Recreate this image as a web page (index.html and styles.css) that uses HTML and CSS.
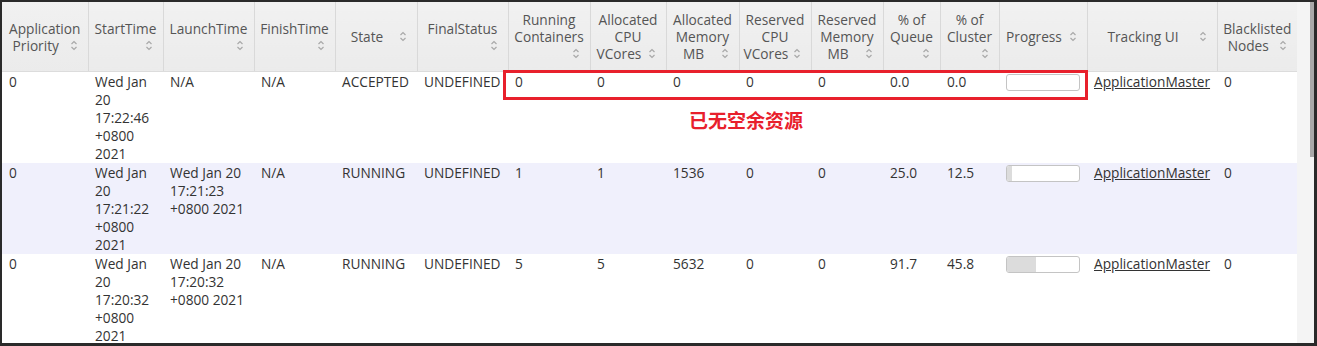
FILE: index.html
```html
<!DOCTYPE html>
<html lang="en">
<head>
<meta charset="utf-8">
<title>Applications</title>
<link rel="stylesheet" href="styles.css">
</head>
<body>
<div class="frame">
  <div class="viewport">
    <table class="apps">
      <colgroup>
        <col style="width:86px"><col style="width:75px"><col style="width:91px"><col style="width:81px">
        <col style="width:82px"><col style="width:91px"><col style="width:82px"><col style="width:76px">
        <col style="width:73px"><col style="width:72px"><col style="width:72px"><col style="width:57px">
        <col style="width:59px"><col style="width:88px"><col style="width:130px"><col style="width:80px">
      </colgroup>
      <thead>
        <tr>
          <th>Application Priority<span class="si"></span></th>
          <th>StartTime<span class="si"></span></th>
          <th>LaunchTime<span class="si"></span></th>
          <th>FinishTime<span class="si"></span></th>
          <th>State<span class="si"></span></th>
          <th>FinalStatus<span class="si"></span></th>
          <th>Running Containers<span class="si"></span></th>
          <th>Allocated CPU VCores<span class="si"></span></th>
          <th>Allocated Memory MB<span class="si"></span></th>
          <th>Reserved CPU VCores<span class="si"></span></th>
          <th>Reserved Memory MB<span class="si"></span></th>
          <th>% of Queue<span class="si"></span></th>
          <th>% of Cluster<span class="si"></span></th>
          <th>Progress<span class="si"></span></th>
          <th>Tracking UI<span class="si"></span></th>
          <th>Blacklisted Nodes<span class="si"></span></th>
        </tr>
      </thead>
      <tbody>
        <tr>
          <td>0</td><td>Wed Jan 20 17:22:46 +0800 2021</td><td>N/A</td><td>N/A</td>
          <td>ACCEPTED</td><td>UNDEFINED</td><td>0</td><td>0</td><td>0</td><td>0</td><td>0</td>
          <td>0.0</td><td>0.0</td>
          <td><div class="bar"><div class="fill" style="width:0%"></div></div></td>
          <td><a href="#">ApplicationMaster</a></td><td>0</td>
        </tr>
        <tr class="even">
          <td>0</td><td>Wed Jan 20 17:21:22 +0800 2021</td><td>Wed Jan 20 17:21:23 +0800 2021</td><td>N/A</td>
          <td>RUNNING</td><td>UNDEFINED</td><td>1</td><td>1</td><td>1536</td><td>0</td><td>0</td>
          <td>25.0</td><td>12.5</td>
          <td><div class="bar"><div class="fill" style="width:5px"></div></div></td>
          <td><a href="#">ApplicationMaster</a></td><td>0</td>
        </tr>
        <tr>
          <td>0</td><td>Wed Jan 20 17:20:32 +0800 2021</td><td>Wed Jan 20 17:20:32 +0800 2021</td><td>N/A</td>
          <td>RUNNING</td><td>UNDEFINED</td><td>5</td><td>5</td><td>5632</td><td>0</td><td>0</td>
          <td>91.7</td><td>45.8</td>
          <td><div class="bar"><div class="fill" style="width:40%"></div></div></td>
          <td><a href="#">ApplicationMaster</a></td><td>0</td>
        </tr>
      </tbody>
    </table>
    <div class="callout-box"></div>
    <div class="callout-text">已无空余资源</div>
  </div>
  <div class="scrollbar"><div class="thumb"></div></div>
</div>
</body>
</html>
```
FILE: styles.css
```css
html, body {
  margin: 0;
  padding: 0;
  background: #ffffff;
}
body {
  font-family: "Open Sans", "Noto Sans", "Noto Sans CJK SC", sans-serif;
  font-size: 13.7px;
  color: #333333;
}
.frame {
  width: 1317px;
  height: 346px;
  box-sizing: border-box;
  border-top: 2px solid #2a2a2a;
  border-left: 2px solid #2a2a2a;
  border-right: 3px solid #2a2a2a;
  border-bottom: 3px solid #2a2a2a;
  display: flex;
  overflow: hidden;
}
.viewport {
  position: relative;
  flex: 1;
  overflow: hidden;
}
.apps {
  width: 1295px;
  table-layout: fixed;
  border-collapse: collapse;
}
.apps th {
  height: 69px;
  padding: 0 4px;
  background: linear-gradient(#f1f1f1, #ebebeb);
  border-right: 1px solid #d9d9d9;
  border-bottom: 1px solid #dcdcdc;
  color: #555555;
  font-weight: normal;
  line-height: 17px;
  text-align: center;
  vertical-align: middle;
}
.apps th:last-child {
  border-right: none;
}
.si {
  float: right;
  width: 8px;
  height: 17px;
  margin: 0 6px 0 4px;
  background:
    url("data:image/svg+xml,%3Csvg xmlns='http://www.w3.org/2000/svg' width='8' height='17' viewBox='0 0 8 17'%3E%3Cpath d='M1.5 7 L4 4.5 L6.5 7 M1.5 10 L4 12.5 L6.5 10' fill='none' stroke='%23a8a8a8' stroke-width='1.2'/%3E%3C/svg%3E") no-repeat center;
}
.apps td {
  height: 90px;
  box-sizing: border-box;
  padding: 1px 3px 0 7px;
  line-height: 18px;
  vertical-align: top;
}
.apps tr.even td {
  background: #f0f0fc;
}
.apps a {
  color: #333333;
  text-decoration: underline;
}
.bar {
  width: 72px;
  height: 15px;
  margin-top: 1px;
  border: 1px solid #c4c4c4;
  border-radius: 3px;
  background: #ffffff;
  overflow: hidden;
}
.fill {
  height: 100%;
  background: #dcdcdc;
}
.callout-box {
  position: absolute;
  left: 501px;
  top: 68px;
  width: 579px;
  height: 24px;
  border: 3px solid #e8202c;
}
.callout-text {
  position: absolute;
  left: 687px;
  top: 106px;
  font-family: "Noto Sans CJK SC", sans-serif;
  font-weight: bold;
  font-size: 19px;
  line-height: 24px;
  color: #e8202c;
}
.scrollbar {
  width: 17px;
  background: #f4f4f4;
  display: flex;
  justify-content: flex-end;
}
.thumb {
  width: 4px;
  height: 155px;
  background: #a9a9a9;
}
```
